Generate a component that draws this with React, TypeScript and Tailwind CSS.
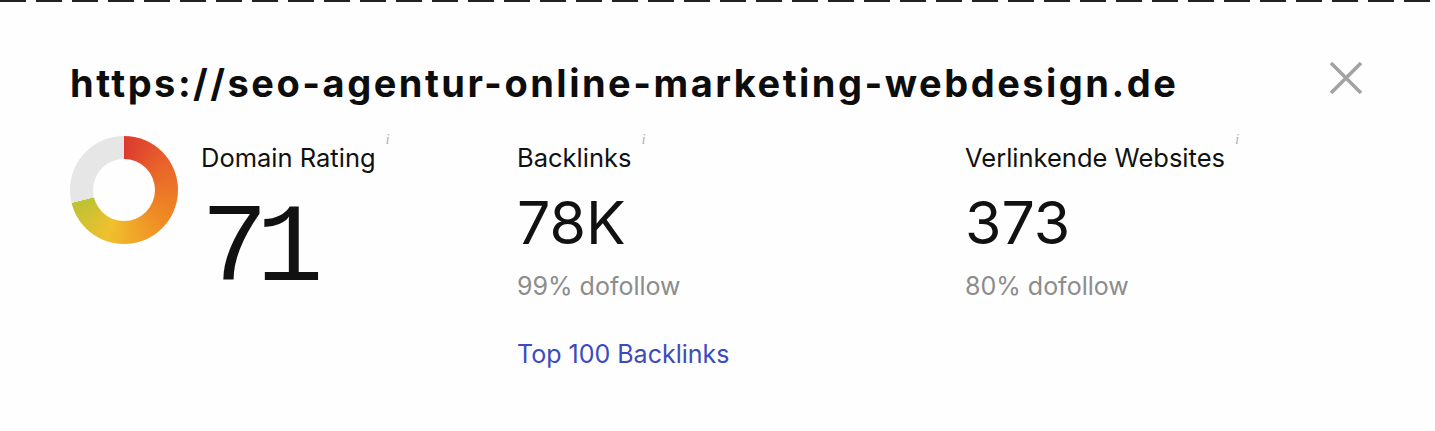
function InfoMark() {
  return (
    <span className="ml-[10px] -mt-[10px] self-start [font-family:'Liberation_Serif',serif] text-[15px] italic leading-none text-[#b5b5b5]">
      i
    </span>
  );
}

function CloseIcon() {
  return (
    <svg width="34" height="34" viewBox="0 0 34 34" fill="none">
      <path d="M2 2 L32 32 M32 2 L2 32" stroke="#a3a3a3" strokeWidth="3.6" strokeLinecap="butt" />
    </svg>
  );
}

export default function App() {
  return (
    <div className="h-[431px] w-full overflow-hidden bg-[#fefefe] [font-family:'Inter',sans-serif] text-[#111]">
      <div className="h-[2px] w-full bg-[repeating-linear-gradient(90deg,#222_0px,#222_26px,transparent_26px,transparent_36px)]" />

      <div className="px-[70px] pt-[57px]">
        <div className="flex items-start justify-between">
          <h1 className="text-[38px] font-bold leading-[48px] tracking-[2.5px] text-[#0d0d0d]">
            https://seo-agentur-online-marketing-webdesign.de
          </h1>
          <button className="mr-[2px] mt-[2px]">
            <CloseIcon />
          </button>
        </div>

        <div className="mt-[29px] flex">
          <div className="flex w-[447px]">
            <div className="flex h-[108px] w-[108px] shrink-0 items-center justify-center rounded-full bg-[conic-gradient(#dc3a2e_0deg,#e9652a_60deg,#ef8c24_130deg,#f1c02e_200deg,#bcc233_256deg,#e6e6e6_256deg,#e6e6e6_360deg)]">
              <div className="h-[62px] w-[62px] rounded-full bg-[#fefefe]" />
            </div>
            <div className="ml-[23px] mt-[6px] flex flex-col">
              <div className="flex items-center text-[25.5px] leading-[32px]">
                <span>Domain Rating</span>
                <InfoMark />
              </div>
              <div className="mt-[22px] [font-family:'Liberation_Mono',monospace] text-[112px] leading-[110px] tracking-[-12px]">71</div>
            </div>
          </div>

          <div className="mt-[6px] flex w-[448px] flex-col">
            <div className="flex items-center text-[25.5px] leading-[32px]">
              <span>Backlinks</span>
              <InfoMark />
            </div>
            <div className="mt-[14px] text-[59px] leading-[70px]">78K</div>
            <div className="mt-[12px] text-[25px] leading-[32px] text-[#8c8c8c]">99% dofollow</div>
            <a className="mt-[36px] text-[25px] leading-[32px] text-[#3b4bbd]">Top 100 Backlinks</a>
          </div>

          <div className="mt-[6px] flex flex-col">
            <div className="flex items-center text-[25.5px] leading-[32px]">
              <span>Verlinkende Websites</span>
              <InfoMark />
            </div>
            <div className="mt-[14px] text-[59px] leading-[70px]">373</div>
            <div className="mt-[12px] text-[25px] leading-[32px] text-[#8c8c8c]">80% dofollow</div>
          </div>
        </div>
      </div>
    </div>
  );
}
